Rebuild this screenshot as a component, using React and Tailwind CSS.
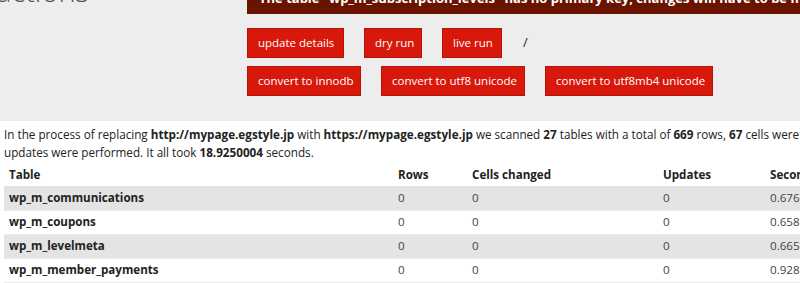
import React from "react";

const rows = [
  { name: "wp_m_communications", rows: 0, cells: 0, updates: 0, secs: "0.676" },
  { name: "wp_m_coupons", rows: 0, cells: 0, updates: 0, secs: "0.658" },
  { name: "wp_m_levelmeta", rows: 0, cells: 0, updates: 0, secs: "0.665" },
  { name: "wp_m_member_payments", rows: 0, cells: 0, updates: 0, secs: "0.928" },
];

function Btn({ children, className = "" }) {
  return (
    <button
      className={`h-[30px] px-[10px] bg-[#d8180b] border border-[#b5130a] text-white text-[11.5px] leading-none whitespace-nowrap text-center ${className}`}
    >
      {children}
    </button>
  );
}

export default function App() {
  return (
    <div className="w-[800px] h-[283px] overflow-hidden bg-white font-['Open_Sans',sans-serif] text-[#222]">
      {/* top actions area */}
      <div className="h-[121px] bg-[#ededed] flex overflow-hidden">
        <div className="w-[247px] shrink-0">
          <h2 className="-mt-[24px] -ml-[4px] text-[29px] font-light text-[#555] leading-[30px]">
            actions
          </h2>
        </div>
        <div className="flex-1 min-w-0">
          <div className="h-[14px] bg-[#6a1300] overflow-hidden whitespace-nowrap pl-[12px]">
            <p className="-mt-[10px] text-white font-bold text-[13px] leading-[16px]">
              The table "wp_m_subscription_levels" has no primary key, changes will have to be made manually
            </p>
          </div>
          <div className="mt-[14px] flex items-center gap-[20px]">
            <Btn className="w-[97px]">update details</Btn>
            <Btn className="w-[58px]">dry run</Btn>
            <Btn className="w-[60px]">live run</Btn>
            <span className="text-[13px] ml-[1px]">/</span>
          </div>
          <div className="mt-[8px] flex items-center gap-[20px]">
            <Btn className="w-[114px]">convert to innodb</Btn>
            <Btn className="w-[144px]">convert to utf8 unicode</Btn>
            <Btn className="w-[168px]">convert to utf8mb4 unicode</Btn>
          </div>
        </div>
      </div>

      {/* result summary */}
      <div className="pl-[4px] pt-[4px] text-[11.7px] leading-[18px] whitespace-nowrap overflow-hidden">
        <p>
          In the process of replacing <b>http://mypage.egstyle.jp</b> with <b>https://mypage.egstyle.jp</b> we scanned <b>27</b> tables with a total of <b>669</b> rows, <b>67</b> cells were changed and <b>4</b>
        </p>
        <p>
          updates were performed. It all took <b>18.9250004</b> seconds.
        </p>
      </div>

      <table className="ml-[4px] mt-[3px] w-[900px] border-collapse text-[11.6px] text-left">
        <thead>
          <tr className="h-[22px]">
            <th className="w-[394px] pl-[5px] font-bold">Table</th>
            <th className="w-[74px] font-bold">Rows</th>
            <th className="w-[191px] font-bold">Cells changed</th>
            <th className="w-[107px] font-bold">Updates</th>
            <th className="font-bold">Seconds</th>
          </tr>
        </thead>
        <tbody>
          {rows.map((r, i) => (
            <tr key={r.name} className={`h-[24px] border-b border-[#ececec] ${i % 2 === 0 ? "bg-[#e4e4e4]" : "bg-white"}`}>
              <td className="pl-[5px] font-bold">{r.name}</td>
              <td className="text-[#444]">{r.rows}</td>
              <td className="text-[#444]">{r.cells}</td>
              <td className="text-[#444]">{r.updates}</td>
              <td className="text-[#444]">{r.secs}</td>
            </tr>
          ))}
        </tbody>
      </table>
    </div>
  );
}
